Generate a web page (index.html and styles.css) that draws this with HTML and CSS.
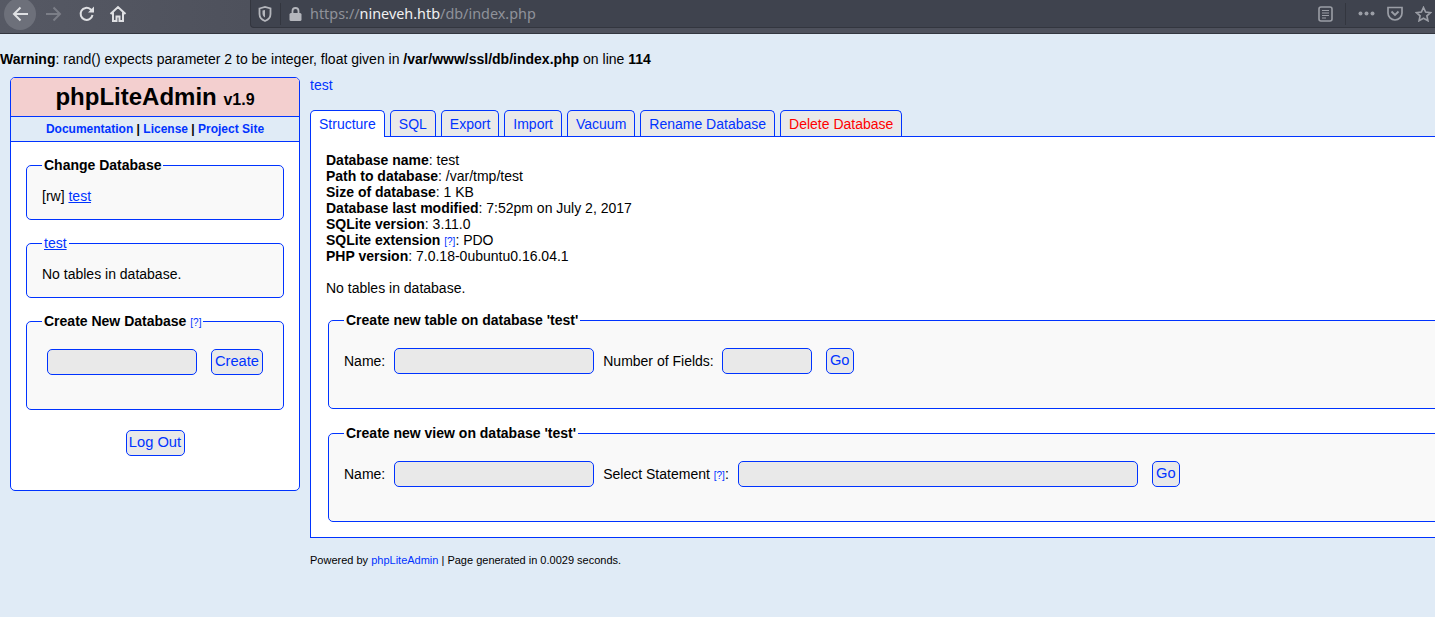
FILE: index.html
```html
<!DOCTYPE html>
<html>
<head>
	<title>phpLiteAdmin</title>
	<link rel="stylesheet" href="styles.css">
</head>
<body>
	<div class="browser">
		<span class="back">
			<svg width="20" height="20" viewBox="0 0 20 20"><path d="M18 10H4M10.500 3.500 4 10l6.500 6.500" fill="none" stroke="#dfe0e3" stroke-width="2"/></svg>
		</span>
		<svg class="nav-icon fwd" width="20" height="20" viewBox="0 0 20 20"><path d="M18 10H4M10.500 3.500 4 10l6.500 6.500" fill="none" stroke="#7b7e87" stroke-width="2" transform="rotate(180 10 10)"/></svg>
		<svg class="nav-icon reload" width="18" height="18" viewBox="0 0 18 18"><path d="M14.500 10A6 6 0 1 1 12.500 4.300L15 6.500" fill="none" stroke="#dfe0e3" stroke-width="2"/><path d="M16 1.500V7.500H10Z" fill="#dfe0e3"/></svg>
		<svg class="nav-icon" width="18" height="18" viewBox="0 0 18 18"><path d="M1.500 9 9 2l7.500 7M4 7.500V16h3.500v-4.500h3V16H14V7.500" fill="none" stroke="#dfe0e3" stroke-width="2"/></svg>
		<div class="urlbar">
			<svg width="14" height="16" viewBox="0 0 14 16"><path d="M1.500 2.500 7 1l5.500 1.500V8C12.500 11.500 9.500 14 7 15 4.500 14 1.500 11.500 1.500 8Z" fill="none" stroke="#b4b6bc" stroke-width="1.800"/><path d="M4.500 4.500 7 4v7.500C5.500 10.500 4.500 9.500 4.500 7.500Z" fill="#b4b6bc"/></svg>
			<span class="url-sep"></span>
			<svg width="13" height="14" viewBox="0 0 13 14"><path d="M3.500 6V4a3 3 0 0 1 6 0v2" fill="none" stroke="#b4b6bc" stroke-width="1.800"/><rect x="0.500" y="6" width="12" height="8" rx="1.500" fill="#b4b6bc"/></svg>
			<span class="url"><span class="url-dim">https://</span>nineveh.htb<span class="url-dim">/db/index.php</span></span>
			<span class="url-end">
				<svg width="15" height="16" viewBox="0 0 15 16"><rect x="1" y="1" width="13" height="14" rx="2" fill="none" stroke="#9b9ea6" stroke-width="1.600"/><path d="M4 4.500h7M4 7h7M4 9.500h7M4 12h4" stroke="#9b9ea6" stroke-width="1.200"/></svg>
				<span class="url-sep"></span>
				<svg width="17" height="5" viewBox="0 0 17 5"><circle cx="2.500" cy="2.500" r="2" fill="#9b9ea6"/><circle cx="8.500" cy="2.500" r="2" fill="#9b9ea6"/><circle cx="14.500" cy="2.500" r="2" fill="#9b9ea6"/></svg>
				<svg width="16" height="15" viewBox="0 0 16 15"><path d="M1 1.500h14V7A7 7 0 0 1 1 7Z" fill="none" stroke="#9b9ea6" stroke-width="1.700"/><path d="M4.500 5.500 8 9l3.500-3.500" fill="none" stroke="#9b9ea6" stroke-width="1.800"/></svg>
				<svg width="17" height="16" viewBox="0 0 17 16"><path d="M8.500 1.500 10.600 6l4.900.6-3.600 3.300 1 4.800-4.400-2.400-4.400 2.400 1-4.800L1.500 6.600 6.400 6Z" fill="none" stroke="#9b9ea6" stroke-width="1.700"/></svg>
			</span>
		</div>
	</div>

	<p class="warning"><b>Warning</b>: rand() expects parameter 2 to be integer, float given in <b>/var/www/ssl/db/index.php</b> on line <b>114</b></p>

	<div class="page">
		<div class="sidebar">
			<h1 class="logo">phpLiteAdmin <span class="version">v1.9</span></h1>
			<div class="side-links">
				<a href="#">Documentation</a> | <a href="#">License</a> | <a href="#">Project Site</a>
			</div>
			<div class="side-body">
				<fieldset class="side-box">
					<legend><b>Change Database</b></legend>
					[rw] <a class="under" href="#">test</a>
				</fieldset>
				<fieldset class="side-box">
					<legend><a class="under" href="#">test</a></legend>
					No tables in database.
				</fieldset>
				<fieldset class="side-box create-db">
					<legend><b>Create New Database</b> <a class="help" href="#">[?]</a></legend>
					<div class="create-row">
						<input class="field db-name" type="text">
						<button class="btn create" type="button">Create</button>
					</div>
				</fieldset>
				<div class="logout"><button class="btn" type="button">Log Out</button></div>
			</div>
		</div>

		<div class="main">
			<a class="db-link" href="#">test</a>
			<div class="tabs">
				<a class="tab active" href="#">Structure</a>
				<a class="tab" href="#">SQL</a>
				<a class="tab" href="#">Export</a>
				<a class="tab" href="#">Import</a>
				<a class="tab" href="#">Vacuum</a>
				<a class="tab" href="#">Rename Database</a>
				<a class="tab danger" href="#">Delete Database</a>
			</div>
			<div class="panel">
				<div class="info">
					<b>Database name</b>: test<br>
					<b>Path to database</b>: /var/tmp/test<br>
					<b>Size of database</b>: 1 KB<br>
					<b>Database last modified</b>: 7:52pm on July 2, 2017<br>
					<b>SQLite version</b>: 3.11.0<br>
					<b>SQLite extension</b> <a class="help" href="#">[?]</a>: PDO<br>
					<b>PHP version</b>: 7.0.18-0ubuntu0.16.04.1<br>
					<br>
					No tables in database.
				</div>
				<fieldset class="main-box">
					<legend><b>Create new table on database 'test'</b></legend>
					<div class="form-row">
						<label>Name:</label>
						<input class="field name" type="text">
						<label>Number of Fields:</label>
						<input class="field num" type="text">
						<button class="btn go" type="button">Go</button>
					</div>
				</fieldset>
				<fieldset class="main-box">
					<legend><b>Create new view on database 'test'</b></legend>
					<div class="form-row">
						<label>Name:</label>
						<input class="field name" type="text">
						<label>Select Statement <a class="help" href="#">[?]</a>:</label>
						<input class="field stmt" type="text">
						<button class="btn go" type="button">Go</button>
					</div>
				</fieldset>
			</div>
			<div class="footer">Powered by <a href="#">phpLiteAdmin</a> | Page generated in 0.0029 seconds.</div>
		</div>
	</div>
</body>
</html>
```

FILE: styles.css
```css
html, body {
	margin: 0;
	height: 617px;
	overflow: hidden;
}
body {
	background-color: #e0ebf6;
	color: #000;
	font-family: "Liberation Sans", Arial, sans-serif;
	font-size: 14px;
	line-height: 16px;
}
a {
	color: #0033ff;
	text-decoration: none;
}
a.under {
	text-decoration: underline;
}
.help {
	font-size: 10px;
	line-height: 1;
}

/* browser bar */
.browser {
	display: flex;
	align-items: flex-start;
	height: 33px;
	padding-left: 4px;
	overflow: hidden;
	background: linear-gradient(90deg, #565964 0, #4e515c 250px, #4e515c 100%);
	border-bottom: 1px solid #33363f;
}
.browser > svg {
	margin-top: 5px;
}
.back {
	display: flex;
	align-items: center;
	justify-content: center;
	flex: none;
	width: 32px;
	height: 32px;
	margin-top: -2px;
	border-radius: 50%;
	background-color: #6d707a;
}
.nav-icon {
	flex: none;
	margin-left: 13px;
}
.browser > .fwd {
	margin-top: 4px;
	margin-left: 8px;
}
.nav-icon.reload {
	margin-left: 14px;
}
.urlbar {
	display: flex;
	align-items: center;
	gap: 8px;
	flex: 1;
	height: 28px;
	margin-left: 123px;
	padding-left: 7px;
	box-sizing: border-box;
	background-color: #3f434e;
	border-left: 1px solid #33363f;
	border-bottom: 1px solid #33363f;
	border-radius: 0 0 0 4px;
}
.url-sep {
	width: 1px;
	height: 22px;
	background-color: #33363f;
}
.url {
	font-family: "Noto Sans", sans-serif;
	font-size: 14.4px;
	color: #f1f1f2;
}
.url-dim {
	color: #8f929a;
}
.url-end {
	display: flex;
	align-items: center;
	gap: 12px;
	margin-left: auto;
	padding-right: 3px;
}

.warning {
	margin: 17px 0 10px;
}

.page {
	display: flex;
	align-items: flex-start;
	gap: 10px;
	padding-left: 10px;
}

/* left column */
.sidebar {
	flex: none;
	width: 288px;
	height: 412px;
	background-color: #fff;
	border: 1px solid #0033ff;
	border-radius: 5px;
	overflow: hidden;
}
.logo {
	margin: 0;
	height: 38px;
	line-height: 38px;
	font-size: 24px;
	text-align: center;
	background-color: #f3cfcf;
	border-bottom: 1px solid #0033ff;
}
.version {
	font-size: 16px;
}
.side-links {
	height: 24px;
	line-height: 24px;
	font-size: 12px;
	font-weight: bold;
	text-align: center;
	border-bottom: 1px solid #0033ff;
	background-color: #e0ebf6;
}
.side-body {
	padding: 15px 15px 0;
}
fieldset {
	margin: 0;
	min-width: 0;
	background-color: #f9f9f9;
	border: 1px solid #0033ff;
	border-radius: 5px;
}
legend {
	padding: 0 2px;
}
.side-box {
	height: 63px;
	box-sizing: border-box;
	margin-bottom: 15px;
	padding: 15px 15px 0;
}
.create-db {
	height: 97px;
	margin-bottom: 20px;
	padding-top: 20px;
}
.create-row {
	display: flex;
	align-items: center;
	gap: 14px;
	padding-left: 5px;
}
.field {
	box-sizing: border-box;
	height: 26px;
	margin: 0;
	padding: 0 4px;
	background-color: #e9e9e9;
	border: 1px solid #0033ff;
	border-radius: 5px;
	font-family: inherit;
	font-size: 14px;
}
.db-name {
	width: 150px;
}
.btn {
	box-sizing: border-box;
	height: 26px;
	margin: 0;
	padding: 0 2px 2px;
	background-color: #e9e9e9;
	border: 1px solid #0033ff;
	border-radius: 5px;
	color: #0033ff;
	font-family: inherit;
	font-size: 14.7px;
}
.create {
	width: 52px;
}
.logout {
	text-align: center;
}
.logout .btn {
	width: 59px;
}

/* right column */
.main {
	flex: none;
	width: 1140px;
}
.db-link {
	display: block;
}
.tabs {
	display: flex;
	gap: 5px;
	margin-top: 17px;
	position: relative;
	z-index: 1;
}
.tab {
	height: 25px;
	line-height: 27px;
	padding: 0 8px;
	background-color: #e9e9e9;
	border: 1px solid #0033ff;
	border-bottom: 0;
	border-radius: 5px 5px 0 0;
}
.tab.active {
	height: 26px;
	margin-bottom: -1px;
	background-color: #fff;
}
.tab.danger {
	color: #ff0000;
}
.panel {
	height: 385px;
	padding: 15px 15px 0;
	background-color: #fff;
	border: 1px solid #0033ff;
}
.info {
	margin-bottom: 16px;
}
.main-box {
	height: 97px;
	box-sizing: border-box;
	margin: 0 -15px 16px 2px;
	padding: 20px 15px 0;
}
.form-row {
	display: flex;
	align-items: center;
	gap: 9px;
}
.name {
	width: 200px;
}
.num {
	width: 90px;
	margin-left: -1px;
}
.stmt {
	width: 400px;
}
.go {
	width: 28px;
	padding: 0 0 2px;
	margin-left: 5px;
}
.footer {
	margin-top: 14px;
	font-size: 11px;
}
```
